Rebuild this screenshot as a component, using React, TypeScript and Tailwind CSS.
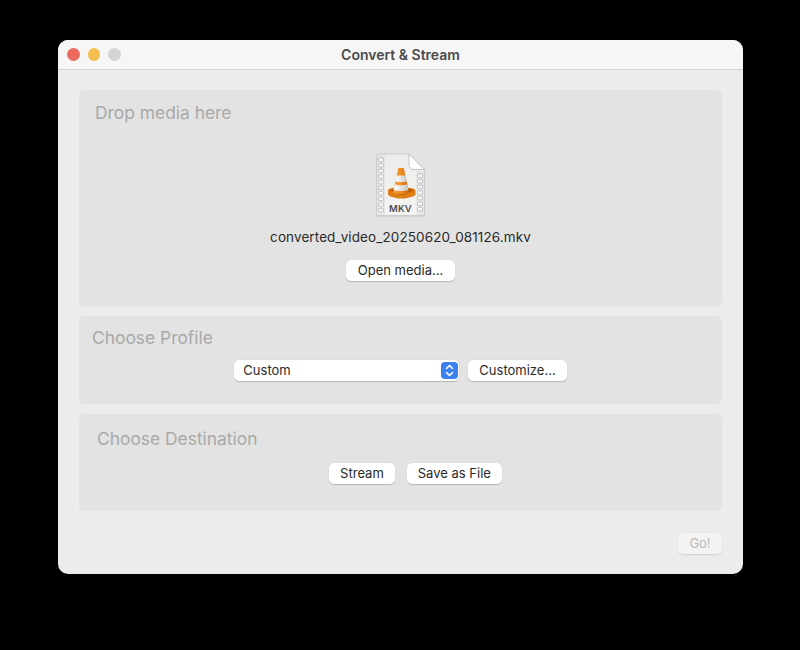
function FileIcon() {
  const left = [0, 1, 2, 3, 4, 5, 6, 7, 8, 9]
  const right = [0, 1, 2, 3, 4, 5, 6]
  return (
    <svg width="50" height="64" viewBox="0 0 50 64">
      <defs>
        <linearGradient id="page" x1="0" x2="0" y1="0" y2="1">
          <stop offset="0" stopColor="#ececea" />
          <stop offset="1" stopColor="#f4f4f2" />
        </linearGradient>
        <linearGradient id="cone" x1="0" x2="1" y1="0" y2="0">
          <stop offset="0" stopColor="#f8a544" />
          <stop offset="0.55" stopColor="#ee8a1e" />
          <stop offset="1" stopColor="#c9640c" />
        </linearGradient>
        <linearGradient id="band" x1="0" x2="1" y1="0" y2="0">
          <stop offset="0" stopColor="#ffffff" />
          <stop offset="1" stopColor="#c8c8c8" />
        </linearGradient>
      </defs>
      <path d="M2 2 H33 L49 18 V62 a1.5 1.5 0 0 1 -1.5 1.5 H2 a1.5 1.5 0 0 1 -1.5 -1.5 V3.5 a1.5 1.5 0 0 1 1.5 -1.5 Z" fill="#9a9a9a" opacity="0.45" />
      <path d="M2 1 H33 L48.5 16.5 V61 a1.5 1.5 0 0 1 -1.5 1.5 H2 a1.5 1.5 0 0 1 -1.5 -1.5 V2.5 a1.5 1.5 0 0 1 1.5 -1.5 Z" fill="url(#page)" stroke="#c6c6c6" strokeWidth="0.8" />
      <rect x="1" y="2" width="8" height="60" fill="#d8d8d6" opacity="0.45" />
      <rect x="40.5" y="18" width="7.5" height="44" fill="#d8d8d6" opacity="0.45" />
      <path d="M33 1 L48.5 16.5 H37.5 a4.5 4.5 0 0 1 -4.5 -4.5 Z" fill="#fdfdfd" stroke="#b8b8b8" strokeWidth="0.8" />
      {left.map((i) => (
        <rect key={"l" + i} x="2.5" y={5 + i * 5.6} width="5" height="3.4" rx="0.8" fill="#f8f8f8" stroke="#b0b0b0" strokeWidth="0.7" />
      ))}
      {right.map((i) => (
        <rect key={"r" + i} x="41.5" y={21 + i * 5.6} width="5" height="3.4" rx="0.8" fill="#f8f8f8" stroke="#b0b0b0" strokeWidth="0.7" />
      ))}
      <path d="M12 37.5 Q12 36 14 35.5 L19 34.5 H31 L37 35.5 Q39.5 36 39.5 38 V41 Q39.5 42.5 37 43.5 L29 45.5 H22 L14.5 43.5 Q12 42.5 12 41 Z" fill="#dd7c12" />
      <path d="M14 37.5 L19 35 H31 L37.5 37.5 L28 41.5 H23 Z" fill="#b25808" />
      <path d="M22.3 15 H27.7 L33 39.5 Q25 42.5 17 39.5 Z" fill="url(#cone)" />
      <path d="M20.7 22.5 H29.3 L30.6 28.5 Q25 30 19.4 28.5 Z" fill="url(#band)" />
      <path d="M18.8 31.5 Q25 33 31.2 31.5 L32.4 37 Q25 39 17.6 37 Z" fill="url(#band)" />
      <text x="24.5" y="58.5" textAnchor="middle" fontFamily="Inter, sans-serif" fontSize="9.5" fontWeight="600" fill="#505050" letterSpacing="0.2">MKV</text>
    </svg>
  )
}

function MacButton({ label, className = "" }: { label: string; className?: string }) {
  return (
    <button className={`h-[21px] px-[11px] rounded-[5px] bg-white text-[13px] leading-[21px] text-[#2a2a2a] shadow-[0_0.5px_1px_rgba(0,0,0,0.2)] ${className}`}>
      {label}
    </button>
  )
}

export default function App() {
  return (
    <div className="w-[800px] h-[650px] bg-black pt-[40px] pl-[58px] font-['Inter','Liberation_Sans',sans-serif]">
      <div className="w-[685px] h-[534px] rounded-[10px] overflow-hidden bg-[#ececec] flex flex-col">
        {/* Title bar */}
        <div className="h-[30px] shrink-0 bg-[#f6f6f6] border-b border-[#d4d4d4] flex items-center px-[9px]">
          <div className="flex gap-[8px] w-[56px]">
            <span className="w-[12.5px] h-[12.5px] rounded-full bg-[#ec6a5e]" />
            <span className="w-[12.5px] h-[12.5px] rounded-full bg-[#f4bf4f]" />
            <span className="w-[12.5px] h-[12.5px] rounded-full bg-[#d4d4d4]" />
          </div>
          <div className="flex-1 text-center pr-[56px] pb-[1px] text-[14px] font-semibold text-[#4a4a4a]">Convert &amp; Stream</div>
        </div>

        <div className="flex-1 flex flex-col px-[21px] pt-[20px]">
          {/* Drop media */}
          <div className="h-[217px] rounded-[5px] bg-[#e3e3e3] flex flex-col">
            <div className="pl-[16px] pt-[12px] text-[17.4px] leading-[22px] text-[#a9a9a9]">Drop media here</div>
            <div className="flex flex-col items-center pt-[29px]">
              <FileIcon />
              <div className="mt-[12px] text-[13.5px] tracking-[0.1px] leading-[16px] text-[#2a2a2a]">converted_video_20250620_081126.mkv</div>
              <MacButton label="Open media..." className="mt-[15px] px-[12px]" />
            </div>
          </div>

          {/* Profile */}
          <div className="h-[88px] mt-[9px] rounded-[5px] bg-[#e3e3e3] flex flex-col">
            <div className="pl-[13px] pt-[11px] text-[17.4px] leading-[22px] text-[#a9a9a9]">Choose Profile</div>
            <div className="flex justify-center items-center gap-[9px] mt-[11px]">
              <div className="w-[225px] h-[21px] rounded-[5px] bg-white shadow-[0_0.5px_1px_rgba(0,0,0,0.2)] flex items-center justify-between pl-[9px] pr-[1px]">
                <span className="text-[13px] text-[#2a2a2a]">Custom</span>
                <span className="w-[17px] h-[17px] rounded-[4px] bg-[#3b82f0] flex items-center justify-center">
                  <svg width="9" height="13" viewBox="0 0 9 13" fill="none" stroke="white" strokeWidth="1.6" strokeLinecap="round" strokeLinejoin="round">
                    <path d="M1.5 4.5 L4.5 1.5 L7.5 4.5" />
                    <path d="M1.5 8.5 L4.5 11.5 L7.5 8.5" />
                  </svg>
                </span>
              </div>
              <MacButton label="Customize..." />
            </div>
          </div>

          {/* Destination */}
          <div className="h-[97px] mt-[10px] rounded-[5px] bg-[#e3e3e3] flex flex-col">
            <div className="pl-[18px] pt-[14px] text-[17.4px] leading-[22px] text-[#a9a9a9]">Choose Destination</div>
            <div className="flex justify-center items-center gap-[12px] mt-[13px] pl-[30px]">
              <MacButton label="Stream" />
              <MacButton label="Save as File" />
            </div>
          </div>

          <div className="flex justify-end mt-[22px]">
            <button className="w-[44px] h-[21px] rounded-[5px] bg-[#f3f3f3] text-[13px] text-[#b9b9b9] shadow-[0_0.5px_1px_rgba(0,0,0,0.12)]">Go!</button>
          </div>
        </div>
      </div>
    </div>
  )
}
